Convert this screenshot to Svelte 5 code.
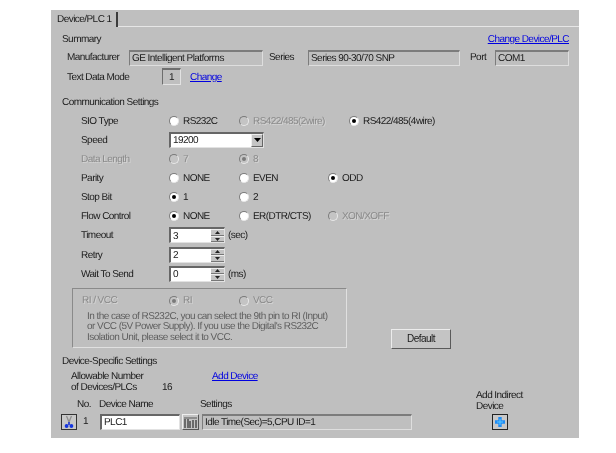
<script>
    const radioRows = [
        { label: 'SIO Type', options: [
            { text: 'RS232C' },
            { text: 'RS422/485(2wire)', off: true, wide: true },
            { text: 'RS422/485(4wire)', on: true }
        ] },
        { label: 'Speed', select: '19200' },
        { label: 'Data Length', off: true, options: [
            { text: '7', off: true },
            { text: '8', off: true, on: true }
        ] },
        { label: 'Parity', options: [
            { text: 'NONE' },
            { text: 'EVEN', mid: true },
            { text: 'ODD', on: true }
        ] },
        { label: 'Stop Bit', options: [
            { text: '1', on: true },
            { text: '2' }
        ] },
        { label: 'Flow Control', options: [
            { text: 'NONE', on: true },
            { text: 'ER(DTR/CTS)', mid: true },
            { text: 'XON/XOFF', off: true }
        ] },
        { label: 'Timeout', spin: '3', unit: '(sec)' },
        { label: 'Retry', spin: '2' },
        { label: 'Wait To Send', spin: '0', unit: '(ms)' }
    ];
</script>

<div class="panel">
    <div class="tabs">
        <div class="tab">Device/PLC 1</div>
    </div>

    <div class="summary-head">
        <span>Summary</span>
        <a href="#top">Change Device/PLC</a>
    </div>
    <div class="summary-row">
        <span class="w-manu">Manufacturer</span>
        <div class="field f-manu">GE Intelligent Platforms</div>
        <span class="w-series">Series</span>
        <div class="field f-series">Series 90-30/70 SNP</div>
        <span class="w-port">Port</span>
        <div class="field f-port">COM1</div>
    </div>
    <div class="mode-row">
        <span class="w-mode">Text Data Mode</span>
        <div class="mode-box">1</div>
        <a href="#top">Change</a>
    </div>

    <div class="section-title comm">Communication Settings</div>
    <div class="rows">
        {#each radioRows as row}
            <div class="row">
                <span class="row-label" class:disabled={row.off}>{row.label}</span>
                {#if row.options}
                    {#each row.options as opt}
                        <span class="option" class:wide={opt.wide} class:mid={opt.mid} class:disabled={opt.off}>
                            <i class="radio" class:on={opt.on} class:off={opt.off}></i><span class="txt">{opt.text}</span>
                        </span>
                    {/each}
                {:else if row.select}
                    <div class="select">
                        <span class="val">{row.select}</span>
                        <b class="drop"><svg width="7" height="4" viewBox="0 0 7 4"><path d="M0 0h7L3.5 4z" fill="#000"/></svg></b>
                    </div>
                {:else}
                    <div class="spin">
                        <span class="val">{row.spin}</span>
                        <div class="spin-btns">
                            <b><svg width="5" height="3" viewBox="0 0 5 3"><path d="M2.5 0L5 3H0z" fill="#222"/></svg></b>
                            <b><svg width="5" height="3" viewBox="0 0 5 3"><path d="M0 0h5L2.5 3z" fill="#222"/></svg></b>
                        </div>
                    </div>
                    {#if row.unit}<span class="unit">{row.unit}</span>{/if}
                {/if}
            </div>
        {/each}
    </div>

    <div class="group-row">
        <div class="group">
            <div class="group-head">
                <span class="group-label">RI / VCC</span>
                <span class="option disabled"><i class="radio on off"></i>RI</span>
                <span class="option disabled"><i class="radio off"></i>VCC</span>
            </div>
            <p>In the case of RS232C, you can select the 9th pin to RI (Input)<br>or VCC (5V Power Supply). If you use the Digital's RS232C<br>Isolation Unit, please select it to VCC.</p>
        </div>
        <button class="default">Default</button>
    </div>

    <div class="section-title device">Device-Specific Settings</div>
    <div class="allow">
        <div class="allow-text">Allowable Number<br>of Devices/PLCs</div>
        <span class="allow-num">16</span>
        <a href="#top">Add Device</a>
    </div>

    <div class="device-area">
        <div class="device-main">
            <div class="device-head">
                <span class="h-no">No.</span>
                <span class="h-name">Device Name</span>
                <span>Settings</span>
            </div>
            <div class="device-row">
                <div class="icon-btn">
                    <svg width="14" height="14" viewBox="0 0 14 14">
                        <path d="M4.5 1L7 7M9.5 1L7 7" stroke="#8f8f8f" stroke-width="1.3" fill="none"/>
                        <path d="M7 7v3" stroke="#1a2fd0" stroke-width="1.6"/>
                        <circle cx="4.6" cy="11" r="1.9" fill="#1436e0"/>
                        <circle cx="9.4" cy="11" r="1.9" fill="#1436e0"/>
                    </svg>
                </div>
                <span class="num">1</span>
                <div class="name-input">PLC1</div>
                <div class="cfg-btn">
                    <svg width="15" height="14" viewBox="0 0 15 14">
                        <path d="M1 2h13v2H1z" fill="#8d8d8d"/>
                        <path d="M2 4v9M5 4v9M7 6v7M10 5v8M13 5v8" stroke="#3a3a3a" stroke-width="1.3" fill="none"/>
                    </svg>
                </div>
                <div class="field f-settings">Idle Time(Sec)=5,CPU ID=1</div>
            </div>
        </div>
        <div class="indirect">
            <div>Add Indirect<br>Device</div>
            <div class="add-btn">
                <svg width="12" height="12" viewBox="0 0 12 12">
                    <path d="M6 1v10M1 6h10" stroke="#1e8cf5" stroke-width="3.4"/>
                    <path d="M6 3v6M3 6h6" stroke="#5cc8ff" stroke-width="1"/>
                </svg>
            </div>
        </div>
    </div>
</div>

<style>
    :global(body) {
        background: #fff;
    }

    .panel {
        box-sizing: border-box;
        width: 528px;
        height: 428px;
        margin: 10px 0 0 51px;
        background: #bfbfbf;
        color: #1a1a1a;
        font-family: 'Liberation Sans', Arial, sans-serif;
        font-size: 10px;
        letter-spacing: -0.55px;
        line-height: 12px;
        text-rendering: geometricPrecision;
        filter: blur(0.35px);
    }

    a {
        color: #0000e0;
        text-decoration: underline;
    }

    .tabs {
        display: flow-root;
        height: 16px;
        border-bottom: 1px solid #e6e6e6;
    }

    .tab {
        box-sizing: border-box;
        width: 67px;
        height: 15px;
        margin-top: 2px;
        padding: 2px 0 0 6px;
        border-right: 2px solid #3c3c3c;
        background: #bfbfbf;
        white-space: nowrap;
    }

    .summary-head {
        display: flex;
        justify-content: space-between;
        padding: 7px 10px 0 11px;
    }

    .summary-row {
        display: flex;
        align-items: center;
        height: 16px;
        margin-top: 4px;
        padding-left: 16px;
    }

    .w-manu { width: 62px; }
    .w-series { padding-left: 6px; width: 39px; }
    .w-port { width: 25px; padding-left: 10px; }

    .field {
        box-sizing: border-box;
        height: 16px;
        padding: 1px 0 0 2px;
        border: 1px solid;
        border-width: 2px 1px 1px 1px;
        border-color: #7c7c7c #dedede #dedede #7c7c7c;
        white-space: nowrap;
    }

    .f-manu { width: 134px; }
    .f-series { width: 152px; }
    .f-port { width: 74px; }
    .f-settings { width: 210px; margin-left: 3px; }

    .mode-row {
        display: flex;
        align-items: center;
        height: 17px;
        margin-top: 2px;
        padding-left: 16px;
    }

    .w-mode { width: 95px; padding-top: 2px; }
    .mode-row a { padding-top: 2px; }

    .mode-box {
        box-sizing: border-box;
        width: 19px;
        height: 17px;
        margin-right: 9px;
        padding-top: 2px;
        text-align: center;
        border: 1px solid;
        border-width: 2px 1px 1px 1px;
        border-color: #6e6e6e #e2e2e2 #e2e2e2 #6e6e6e;
    }

    .section-title {
        padding-left: 11px;
    }

    .comm { margin-top: 12px; }

    .rows {
        margin-top: 2px;
    }

    .row {
        display: flex;
        align-items: center;
        height: 19.15px;
        padding-left: 30px;
    }

    .row-label { width: 88px; flex: none; padding-top: 2px; }
    .txt, .unit { padding-top: 2px; }
    .val { padding-top: 2px; }

    .option {
        display: flex;
        align-items: center;
        width: 70px;
        flex: none;
        white-space: nowrap;
    }

    .option.wide { width: 110px; }
    .option.mid { width: 89px; }

    .disabled {
        color: #8a8a8a;
        text-shadow: 1px 1px 0 #d4d4d4;
    }

    .radio {
        box-sizing: border-box;
        position: relative;
        display: block;
        flex: none;
        width: 10px;
        height: 10px;
        margin-right: 4px;
        border-radius: 50%;
        background: #fff;
        border: 1px solid;
        border-color: #7a7a7a #e8e8e8 #e8e8e8 #7a7a7a;
    }

    .radio.off {
        background: #c4c4c4;
    }

    .radio.on::after {
        content: '';
        position: absolute;
        left: 2px;
        top: 2px;
        width: 4px;
        height: 4px;
        border-radius: 50%;
        background: #000;
    }

    .radio.on.off::after {
        background: #7a7a7a;
    }

    .select {
        box-sizing: border-box;
        display: flex;
        justify-content: space-between;
        align-items: center;
        width: 95px;
        height: 16px;
        padding-left: 2px;
        background: #fff;
        border: 1px solid;
        border-width: 2px 1px 1px 2px;
        border-color: #666 #e2e2e2 #e2e2e2 #666;
    }

    .drop {
        display: flex;
        align-items: center;
        justify-content: center;
        box-sizing: border-box;
        width: 12px;
        height: 13px;
        background: #c4c4c4;
        border: 1px solid;
        border-color: #eee #666 #666 #eee;
    }

    .spin {
        box-sizing: border-box;
        display: flex;
        justify-content: space-between;
        align-items: center;
        width: 56px;
        height: 16px;
        padding-left: 2px;
        background: #fff;
        border: 1px solid;
        border-width: 2px 1px 1px 2px;
        border-color: #666 #e2e2e2 #e2e2e2 #666;
    }

    .spin-btns {
        display: flex;
        flex-direction: column;
        width: 13px;
        height: 13px;
    }

    .spin-btns b {
        display: flex;
        flex: 1;
        align-items: center;
        justify-content: center;
        background: #c4c4c4;
        border-top: 1px solid #eee;
        border-bottom: 1px solid #777;
    }

    .unit {
        margin-left: 3px;
    }

    .group-row {
        display: flex;
        align-items: flex-end;
        margin-top: 5px;
        padding-left: 21px;
    }

    .group {
        box-sizing: border-box;
        width: 275px;
        height: 60px;
        padding: 5px 0 0 9px;
        border: 1px solid;
        border-color: #8a8a8a #e0e0e0 #e0e0e0 #8a8a8a;
        color: #8a8a8a;
    }

    .group-head {
        display: flex;
        align-items: center;
        height: 14px;
    }

    .group-label { width: 87px; text-shadow: 1px 1px 0 #d4d4d4; }

    .group p {
        margin: 4px 0 0 5px;
        line-height: 10.2px;
        color: #5f5f5f;
        white-space: nowrap;
    }

    .default {
        box-sizing: border-box;
        width: 60px;
        height: 20px;
        margin: 0 0 -1px 44px;
        padding: 0;
        background: #c4c4c4;
        border: 1px solid;
        border-color: #ececec #5a5a5a #5a5a5a #ececec;
        color: #1a1a1a;
        font: inherit;
        letter-spacing: inherit;
    }

    .device { margin-top: 8px; }

    .allow {
        display: flex;
        align-items: flex-start;
        margin-top: 3px;
        padding-left: 20px;
    }

    .allow-text { width: 91px; line-height: 11px; }
    .allow-num { width: 50px; padding-top: 11px; }

    .device-area {
        display: flex;
        margin-top: -6px;
    }

    .device-main {
        padding-top: 11px;
    }

    .device-head {
        display: flex;
        height: 15px;
        padding-left: 26px;
    }

    .h-no { width: 22px; }
    .h-name { width: 101px; }

    .device-row {
        display: flex;
        align-items: center;
        height: 16px;
        padding-left: 10px;
    }

    .icon-btn {
        box-sizing: border-box;
        display: flex;
        align-items: center;
        justify-content: center;
        width: 16px;
        height: 16px;
        background: #c8c8c8;
        border: 1px solid #333;
    }

    .num { width: 23px; padding-left: 6px; box-sizing: border-box; }

    .name-input {
        box-sizing: border-box;
        width: 80px;
        height: 16px;
        padding-left: 2px;
        padding-top: 1px;
        background: #fff;
        border: 1px solid;
        border-width: 2px 1px 1px 2px;
        border-color: #666 #e2e2e2 #e2e2e2 #666;
    }

    .cfg-btn {
        box-sizing: border-box;
        display: flex;
        align-items: center;
        justify-content: center;
        width: 17px;
        height: 16px;
        margin-left: 2px;
        background: #c4c4c4;
        border: 1px solid;
        border-color: #eee #555 #555 #eee;
    }

    .indirect {
        display: flex;
        flex-direction: column;
        margin-left: 64px;
        padding-top: 2px;
        line-height: 11px;
    }

    .add-btn {
        box-sizing: border-box;
        display: flex;
        align-items: center;
        justify-content: center;
        width: 16px;
        height: 16px;
        margin: auto 0 0 16px;
        background: #c8c8c8;
        border: 1px solid #222;
    }
</style>
